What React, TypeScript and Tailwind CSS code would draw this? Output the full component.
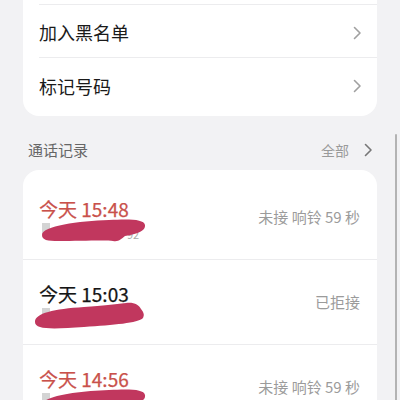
import React from "react";

const font = { fontFamily: '"Noto Sans CJK SC", "Noto Sans", sans-serif' };

function Chevron({ className = "" }: { className?: string }) {
  return (
    <svg width="9" height="14" viewBox="0 0 9 14" className={className}>
      <path d="M1.5 1.5 L7 7 L1.5 12.5" fill="none" stroke="currentColor" strokeWidth="1.6" strokeLinecap="round" strokeLinejoin="round" />
    </svg>
  );
}

function Blob({ variant }: { variant: number }) {
  if (variant === 1) {
    return (
      <svg width="112" height="26" viewBox="0 0 112 26" className="absolute left-0 top-[-3px]">
        <path d="M3 17 C3 8 40 3 70 2 C90 1 105 1 106 7 C107 13 98 16 86 18 C82 21 80 24 74 23 C68 22 40 23 20 23 C8 23 3 22 3 17 Z" fill="#c1375e" />
      </svg>
    );
  }
  return (
    <svg width="112" height="28" viewBox="0 0 112 28" className="absolute left-[-5px] top-[-4px]">
      <path d="M1 20 C1 11 20 7 50 5 C70 4 80 2 92 1 C100 0 105 3 107 7 C109 10 111 12 109 16 C104 21 80 23 50 25 C20 27 1 28 1 20 Z" fill="#c1375e" />
    </svg>
  );
}

function CallRow({ time, red, status, blob, last }: { time: string; red?: boolean; status: string; blob: number; last?: boolean }) {
  return (
    <div className={`flex h-[85px] items-start pl-4 ${last ? "" : "border-b border-[#ececee]"}`}>
      <div className="flex flex-1 flex-col pt-[21px]">
        <div className={`text-[19px] leading-[26px] [-webkit-text-stroke:0.25px_currentColor] ${red ? "text-[#c9514b]" : "text-[#151515]"}`}>{time}</div>
        <div className="relative mt-[-1px] h-[22px] w-[110px]">
          <div className="absolute left-[3px] top-[2px] h-[12px] w-[8px] bg-[#d4d4d4]" />
          {blob === 1 && <div className="absolute left-[88px] top-[6px] text-[11px] leading-[14px] text-[#aaa]">92</div>}
          <Blob variant={blob} />
        </div>
      </div>
      <div className="pr-[17px] pt-[31px] text-[15px] leading-[22px] text-[#9b9b9b]">{status}</div>
    </div>
  );
}

export default function App() {
  return (
    <div className="relative h-[400px] w-[400px] overflow-hidden bg-[#f2f2f4]" style={font}>
      <div className="mx-[23px] overflow-hidden rounded-b-[16px] bg-white">
        <div className="h-[5px] border-b border-[#ececee] ml-4" />
        <div className="ml-4 flex h-[53px] items-center border-b border-[#ececee] pt-[3px] pr-[15px]">
          <span className="flex-1 text-[18px] text-[#1a1a1a]">加入黑名单</span>
          <Chevron className="text-[#a0a0a0]" />
        </div>
        <div className="ml-4 flex h-[53px] items-center pt-[3px] pr-[15px]">
          <span className="flex-1 text-[18px] text-[#1a1a1a]">标记号码</span>
          <Chevron className="text-[#a0a0a0]" />
        </div>
        <div className="h-[5px]" />
      </div>

      <div className="flex h-[54px] items-center pl-[28px] pr-[27px] pt-[14px]">
        <span className="flex-1 text-[15px] text-[#666]">通话记录</span>
        <span className="text-[14px] text-[#9a9a9a]">全部</span>
        <Chevron className="ml-[15px] text-[#777]" />
      </div>

      <div className="mx-[23px] overflow-hidden rounded-t-[16px] bg-white pt-[5px]">
        <CallRow time="今天 15:48" red status="未接 响铃 59 秒" blob={1} />
        <CallRow time="今天 15:03" status="已拒接" blob={2} />
        <CallRow time="今天 14:56" red status="未接 响铃 59 秒" blob={1} last />
      </div>

      <div className="absolute right-[3px] top-[134px] h-[280px] w-[2px] rounded bg-[#b3b3b3]" />
    </div>
  );
}
